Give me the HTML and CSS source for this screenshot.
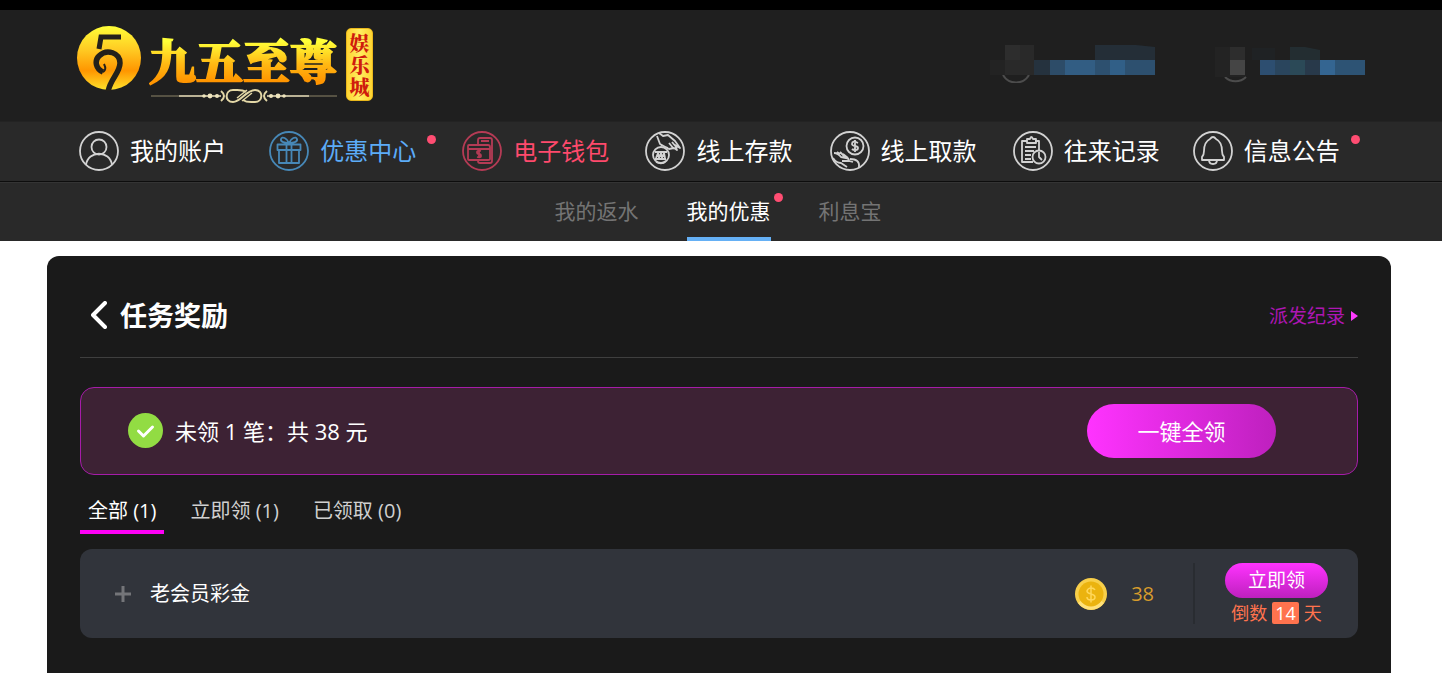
FILE: index.html
```html
<!DOCTYPE html>
<html lang="zh-CN">
<head>
<meta charset="utf-8">
<meta name="viewport" content="width=device-width, initial-scale=1">
<title>任务奖励</title>
<link rel="stylesheet" href="styles.css">
</head>
<body>
<header class="header">
  <a class="logo" href="#">
    <svg class="logo-mark" viewBox="0 0 66 66" aria-hidden="true">
      <defs><linearGradient id="gold" x1="0" y1="0" x2="0" y2="1"><stop offset="0" stop-color="#ffff38"/><stop offset=".38" stop-color="#ffc922"/><stop offset=".7" stop-color="#ff9600"/><stop offset="1" stop-color="#ffe22c"/></linearGradient></defs>
      <circle cx="33" cy="33" r="32" fill="url(#gold)"/>
      <path d="M45 12H25L23 24" fill="none" stroke="#24211b" stroke-width="5"/>
      <path d="M27 47C20 44 18 36 23 31C31 23 44 28 44 38C44 48 34 54 32 67" fill="none" stroke="#24211b" stroke-width="5.500"/>
      <path d="M27 47Q31 45 28 39" fill="none" stroke="#24211b" stroke-width="2"/>
    </svg>
    <span class="wordmark">
      <span class="brand">九五至尊</span>
      <svg class="ornament" viewBox="0 0 190 18" aria-hidden="true">
        <g fill="none" stroke="#e3d7a6"><path d="M2 9H30M160 9H188" stroke="#8d8568"/><path d="M72 4q6 5 0 10M118 4q-6 5 0 10" stroke-width="2"/>
        <path d="M97 5C93 2 88 3 84 3C76 3 75 15 84 15C92 15 97 3 106 3C115 3 114 15 106 15C102 15 98 16 94 13" stroke-width="2"/><path d="M88 11l10-8M93 14l10-8" stroke-width="1.500"/></g>
        <path d="M30 9h42M118 9h42" stroke="#eee4bd" stroke-width="1.600"/>
        <g fill="#eee4bd"><circle cx="55" cy="9" r="1.800"/><circle cx="61" cy="9" r="2.400"/><circle cx="68" cy="9" r="2"/><circle cx="122" cy="9" r="2"/><circle cx="129" cy="9" r="2.400"/><circle cx="135" cy="9" r="1.800"/></g>
      </svg>
    </span>
    <span class="seal">娱乐城</span>
  </a>
  <svg class="account" viewBox="0 0 376 38" aria-hidden="true">
    <path d="M13 30a15 15 0 0 0 26 0M235 32a15 15 0 0 0 21 0" fill="none" stroke="#4c4c4c" stroke-width="2"/>
    <path fill="#232323" d="M0 15h15v15H0zM225 2h30v30h-30z"/>
    <path fill="#292929" d="M15 0h29v30H15z"/><path fill="#2d2d2d" d="M15 0h15v15H15zM240 2h15v13h-15z"/>
    <path fill="#454545" d="M240 15h15v15h-15z"/>
    <path fill="#242e37" d="M105 0h41l19 2v13h-60z"/>
    <path fill="#20262a" d="M262 3h23v12h-23z" opacity=".5"/><path fill="#232d31" d="M300 2h15l15 3v10h-30z"/>
    <path fill="#25323e" d="M44 15h16v15H44z"/><path fill="#2d4c68" d="M60 15h15v15H60z"/>
    <path fill="#325d83" d="M75 15h30v15H75z"/><path fill="#2d506f" d="M105 15h60v15h-60z"/><path fill="#315f87" d="M120 15h15v15h-15z"/>
    <path fill="#2d4e70" d="M270 15h15v15h-15z"/><path fill="#2a455d" d="M285 15h15v15h-15z"/><path fill="#2b4957" d="M300 15h15v15h-15z"/><path fill="#28394a" d="M315 15h15v15h-15z"/><path fill="#346591" d="M330 15h15v15h-15z"/><path fill="#2d5374" d="M345 15h30v15h-30z"/>
  </svg>
</header>

<nav class="nav" aria-label="主菜单">
  <a class="nav-item" href="#"><svg class="nav-icon" viewBox="0 0 40 40"><circle cx="20" cy="20" r="19"/><circle cx="20" cy="16" r="7.500"/><path d="M7 34c2-15 24-15 26 0"/></svg><span>我的账户</span></a>
  <a class="nav-item blue" href="#"><svg class="nav-icon" viewBox="0 0 40 40"><circle cx="20" cy="20" r="19"/><path d="M8.500 13.500h23V19h-23zM10 19v13h20V19M17.500 13.500V32M22.500 13.500V32M20 12c-4 0-9-1-8-4s6-1 8 4c2-5 7-7 8-4s-4 4-8 4"/></svg><span class="dotted">优惠中心</span></a>
  <a class="nav-item red" href="#"><svg class="nav-icon" viewBox="0 0 40 40"><circle cx="20" cy="20" r="19"/><path d="M16 14V9q0-2 2-2h10q2 0 2 2v21q0 2-2 2H18q-2 0-2-2M19 10h8M7 14h19q2 0 2 2v12q0 1-2 1H7q-1 0-1-1V15q0-1 1-1zM6 18h22M19 20q-4-1-4 1t2 2 2 2-4 1M17 19v8"/></svg><span>电子钱包</span></a>
  <a class="nav-item" href="#"><svg class="nav-icon" viewBox="0 0 40 40"><circle cx="20" cy="20" r="19"/><circle cx="16" cy="24" r="8"/><path d="M10 21h12M10 28h11M11 27l2-5 1 5 2-5 1 5 2-5 1 5M12 5l3 8 9 5 5-1 3 2-2-5 5 3-5-7-7-6-5 1-4-3M16 14l7 3M24 12l5 6M27 11l5 6M11 31q6 3 10-1"/></svg><span>线上存款</span></a>
  <a class="nav-item" href="#"><svg class="nav-icon" viewBox="0 0 40 40"><circle cx="20" cy="20" r="19"/><circle cx="25" cy="15" r="8.500"/><path d="M28 12q-6-3-6 1c0 3 6 1 6 4s-5 2-6 1M25 9v12M4 22q4 0 7 4l5 1q3 0 3 3h-7M3 27q3 5 8 5l6 4M10 23l-3-2M15 26l-5-5M18 27l-5-4M20 28q10 0 9 8M19 30l4 1"/></svg><span>线上取款</span></a>
  <a class="nav-item" href="#"><svg class="nav-icon" viewBox="0 0 40 40"><circle cx="20" cy="20" r="19"/><path d="M20 31H9V10h5M22 10h4v9M14 12V8h3q1-4 3 0h3v4zM12 16h11M12 20h9M12 24h6M12 28h6"/><circle cx="26" cy="26" r="6.500"/><path d="M26 21v5l3 3"/></svg><span>往来记录</span></a>
  <a class="nav-item" href="#"><svg class="nav-icon" viewBox="0 0 40 40"><circle cx="20" cy="20" r="19"/><path d="M9 29V26q2-2 2-6c0-6 2-10 6-12q3-4 6 0c4 2 6 6 6 12q0 4 2 6v3zM16 29q0 4 4 4t4-4"/></svg><span class="dotted">信息公告</span></a>
</nav>

<nav class="subnav" aria-label="优惠中心">
  <a class="subnav-item" href="#">我的返水</a>
  <a class="subnav-item current" href="#" aria-current="page">我的优惠</a>
  <a class="subnav-item" href="#">利息宝</a>
</nav>

<main class="panel">
  <div class="panel-head">
    <button class="back" type="button" aria-label="返回"><svg class="back-icon" viewBox="0 0 16 28"><path d="M14 2L2 14l12 12"/></svg></button>
    <h1 class="title">任务奖励</h1>
    <a class="history" href="#">派发纪录<svg class="caret" viewBox="0 0 7 10"><path d="M0 0l7 5-7 5z"/></svg></a>
  </div>

  <section class="summary">
    <svg class="check" viewBox="0 0 35 35" aria-hidden="true"><circle cx="17.500" cy="17.500" r="17.500"/><path d="M10.500 18l5 5 9-9"/></svg>
    <p class="summary-text">未领 1 笔：共 38 元</p>
    <button class="claim-all" type="button">一键全领</button>
  </section>

  <div class="tabs" role="tablist">
    <button class="tab selected" type="button" role="tab" aria-selected="true">全部 (1)</button>
    <button class="tab" type="button" role="tab" aria-selected="false">立即领 (1)</button>
    <button class="tab" type="button" role="tab" aria-selected="false">已领取 (0)</button>
  </div>

  <article class="reward">
    <button class="expand" type="button" aria-label="展开"><svg class="plus" viewBox="0 0 16 16"><path d="M8 0v16M0 8h16"/></svg></button>
    <h2 class="reward-name">老会员彩金</h2>
    <svg class="coin" viewBox="0 0 32 32" aria-hidden="true"><circle cx="16" cy="16" r="16" fill="#f8cf4a"/><path d="M3 25A16 16 0 0 0 29 25L24 21H8z" fill="#ffe17a"/><circle cx="16" cy="16" r="12.500" fill="#ebb30f"/><path d="M20 12q-1-2-4-2t-4 3c0 4 8 2 8 6q0 3-4 3t-4-3M16 7.500v17" fill="none" stroke="#ffd75a" stroke-width="1.500"/></svg>
    <span class="amount">38</span>
    <div class="reward-action">
      <button class="claim" type="button">立即领</button>
      <p class="countdown">倒数<b class="days">14</b>天</p>
    </div>
  </article>
</main>
</body>
</html>
```
FILE: styles.css
```css
* { box-sizing: border-box; }
body {
  margin: 0;
  min-height: 100vh;
  display: flex;
  flex-direction: column;
  border-top: 10px solid #000;
  background: #fff;
  color: #fff;
  font-family: "Open Sans", "Noto Sans CJK SC", sans-serif;
}
a { color: inherit; text-decoration: none; }
button { padding: 0; border: 0; background: none; color: inherit; font: inherit; cursor: pointer; }
h1, h2, p { margin: 0; }
svg { display: block; flex: none; }

.header {
  display: flex;
  justify-content: space-between;
  align-items: flex-start;
  height: 111px;
  padding: 15px 76px 0;
  background: #1f1f1f;
}
.logo { display: flex; gap: 7px; }
.logo-mark { width: 66px; height: 66px; }
.wordmark { display: flex; flex-direction: column; padding-top: 5px; }
.brand {
  font-family: "Noto Serif CJK SC", "Noto Sans CJK SC", serif;
  font-size: 47px;
  font-weight: 900;
  line-height: 57px;
  background: linear-gradient(#ffff38 20%, #ffb813 60%, #ff9500 90%);
  background-clip: text;
  -webkit-background-clip: text;
  -webkit-text-stroke: 2px transparent;
  color: transparent;
}
.ornament { width: 190px; height: 18px; }
.seal {
  width: 27px;
  height: 73px;
  margin-top: 3px;
  padding-top: 3px;
  border: 1px solid #e8b71c;
  border-radius: 5px;
  background: linear-gradient(90deg, #ffd432, #ffee60, #ffd432);
  color: #cf1c0d;
  font-family: "Noto Serif CJK SC", "Noto Sans CJK SC", serif;
  font-size: 20px;
  font-weight: 900;
  line-height: 22px;
  text-align: center;
  overflow-wrap: anywhere;
}
.account { width: 376px; height: 38px; margin-top: 20px; }

.nav {
  display: grid;
  grid-template-columns: 190fr 193fr 183fr 184fr 183fr 180fr 175fr;
  align-items: center;
  height: 60px;
  padding: 0 74px 2px 79px;
  border-top: 1px solid #232323;
  background: #292929;
}
.nav-item { display: flex; align-items: center; gap: 11px; font-size: 24px; line-height: 36px; white-space: nowrap; }
.nav-icon { width: 40px; height: 40px; fill: none; stroke: #d2d2d2; stroke-width: 1.8; stroke-linejoin: round; }
.blue { color: #5cacf8; }
.blue .nav-icon { stroke: #4788b7; }
.red { color: #ff4a6c; }
.red .nav-icon { stroke: #b53b55; }
.dotted, .current { position: relative; }
.dotted::after, .current::after {
  content: "";
  position: absolute;
  top: 2px;
  right: -20px;
  width: 9px;
  height: 9px;
  border-radius: 50%;
  background: #ff4d72;
}

.subnav {
  display: flex;
  justify-content: center;
  gap: 48px;
  height: 60px;
  padding-right: 6px;
  border-top: 1px solid #0d0d0d;
  background: #292929;
  box-shadow: inset 0 1px #343434;
}
.subnav-item { color: #747474; font-size: 21px; line-height: 59px; }
.current { border-bottom: 4px solid #65b0f5; color: #fff; }
.current::after { top: 11px; right: -12px; }

.panel {
  flex: 1;
  margin: 15px 51px 0 47px;
  padding: 0 33px 35px;
  border-radius: 12px 12px 0 0;
  background: #1a1a1a;
}
.panel-head {
  display: flex;
  align-items: flex-start;
  height: 102px;
  padding: 40px 0 0 11px;
  border-bottom: 1px solid #3f3f3f;
}
.back { margin: 5px 13px 0 0; }
.back-icon { width: 16px; height: 28px; fill: none; stroke: #fff; stroke-width: 4; stroke-linecap: round; stroke-linejoin: round; }
.title { font-size: 27px; line-height: 40px; }
.history { display: flex; align-items: center; gap: 6px; margin-left: auto; color: #ad16b3; font-size: 19px; line-height: 40px; }
.caret { width: 7px; height: 10px; fill: #ff3bff; }

.summary {
  display: flex;
  align-items: center;
  gap: 12px;
  height: 88px;
  margin-top: 29px;
  padding: 0 81px 1px 47px;
  border: 1px solid #a61ca9;
  border-radius: 14px;
  background: #3d2234;
}
.check { width: 35px; height: 35px; fill: #92dc43; }
.check path { fill: none; stroke: #fff; stroke-width: 3; stroke-linecap: round; stroke-linejoin: round; }
.summary-text { font-size: 22px; line-height: 32px; }
.claim-all {
  width: 189px;
  height: 54px;
  margin-left: auto;
  padding-bottom: 2px;
  border-radius: 27px;
  background: linear-gradient(90deg, #ff33ff, #be20be);
  font-size: 22px;
}

.tabs { display: flex; gap: 18px; margin-top: 20px; }
.tab { padding: 0 8px 3px; border-bottom: 4px solid transparent; color: #d0d0d0; font-size: 20px; line-height: 32px; }
.selected { border-color: #ff00f6; color: #fff; }

.reward {
  display: flex;
  align-items: center;
  height: 89px;
  margin-top: 15px;
  padding-left: 35px;
  border-radius: 12px;
  background: #31343b;
}
.expand { margin-right: 19px; }
.plus { width: 16px; height: 16px; stroke: #747579; stroke-width: 3; }
.reward-name { font-size: 20px; font-weight: 400; line-height: 30px; }
.coin { width: 32px; height: 32px; margin-left: auto; }
.amount { margin: 0 39px 0 24px; color: #d79c2c; font-size: 20px; line-height: 30px; }
.reward-action {
  display: flex;
  flex-direction: column;
  align-items: center;
  gap: 4px;
  width: 165px;
  height: 61px;
  border-left: 2px solid #292c31;
}
.claim {
  width: 103px;
  height: 35px;
  border-radius: 18px;
  background: linear-gradient(#ff33ff, #be20be);
  font-size: 19px;
  line-height: 35px;
}
.countdown { display: flex; gap: 5px; color: #ff734e; font-size: 18px; line-height: 22px; }
.days { padding: 0 3px; border-radius: 2px; background: #ff734e; color: #fff; font-weight: 400; }
```
